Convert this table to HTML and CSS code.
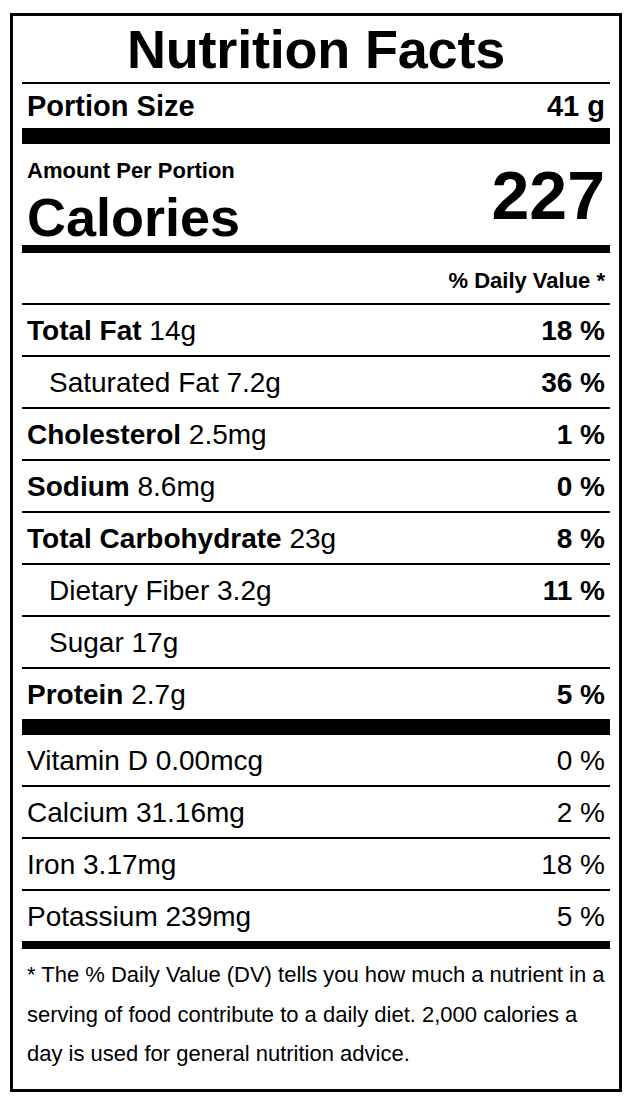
FILE: index.html
```html
<!DOCTYPE html>
<html lang="en">
<head>
<meta charset="utf-8">
<title>Nutrition Facts</title>
<link rel="stylesheet" href="styles.css">
</head>
<body>
<section class="label">
  <h1 class="title">Nutrition Facts</h1>
  <div class="portion">
    <span>Portion Size</span>
    <span>41 g</span>
  </div>
  <div class="calories">
    <div class="cal-left">
      <div class="amount">Amount Per Portion</div>
      <div class="cal-word">Calories</div>
    </div>
    <div class="cal-num">227</div>
  </div>
  <div class="dv-head">% Daily Value *</div>
  <div class="row"><span><b>Total Fat</b> 14g</span><b>18 %</b></div>
  <div class="row sub"><span>Saturated Fat 7.2g</span><b>36 %</b></div>
  <div class="row"><span><b>Cholesterol</b> 2.5mg</span><b>1 %</b></div>
  <div class="row"><span><b>Sodium</b> 8.6mg</span><b>0 %</b></div>
  <div class="row"><span><b>Total Carbohydrate</b> 23g</span><b>8 %</b></div>
  <div class="row sub"><span>Dietary Fiber 3.2g</span><b>11 %</b></div>
  <div class="row sub"><span>Sugar 17g</span></div>
  <div class="row thick"><span><b>Protein</b> 2.7g</span><b>5 %</b></div>
  <div class="row"><span>Vitamin D 0.00mcg</span><span>0 %</span></div>
  <div class="row"><span>Calcium 31.16mg</span><span>2 %</span></div>
  <div class="row"><span>Iron 3.17mg</span><span>18 %</span></div>
  <div class="row medium"><span>Potassium 239mg</span><span>5 %</span></div>
  <p class="note">* The % Daily Value (DV) tells you how much a nutrient in a serving of food contribute to a daily diet. 2,000 calories a day is used for general nutrition advice.</p>
</section>
</body>
</html>
```

FILE: styles.css
```css
html, body {
  margin: 0;
  padding: 0;
  background: #fff;
}

body {
  font-family: "Liberation Sans", Arial, Helvetica, sans-serif;
  color: #000;
  padding: 13px 12px 12px 10px;
}

.label {
  width: 588px;
  border: 3px solid #000;
  padding: 0 9px;
}

.title {
  margin: 0;
  font-size: 54px;
  font-weight: 700;
  line-height: 66px;
  text-align: center;
  border-bottom: 2px solid #000;
  letter-spacing: -0.2px;
}

.portion {
  display: flex;
  justify-content: space-between;
  font-size: 29px;
  font-weight: 700;
  line-height: 44px;
  padding: 0 5px;
  border-bottom: 16px solid #000;
}

.calories {
  display: flex;
  justify-content: space-between;
  align-items: flex-start;
  padding: 0 5px;
  border-bottom: 8px solid #000;
  height: 101px;
}

.cal-left {
  padding-top: 14px;
}

.amount {
  font-size: 22px;
  font-weight: 700;
  line-height: 26px;
  margin-bottom: 5px;
}

.cal-word {
  font-size: 54px;
  font-weight: 700;
  line-height: 56px;
}

.cal-num {
  font-size: 68px;
  font-weight: 700;
  line-height: 68px;
  padding-top: 17px;
}

.dv-head {
  font-size: 22px;
  font-weight: 700;
  line-height: 44px;
  height: 44px;
  padding: 6px 5px 0;
  text-align: right;
  border-bottom: 2px solid #000;
}

.row {
  display: flex;
  justify-content: space-between;
  font-size: 28px;
  line-height: 48px;
  height: 48px;
  padding: 2px 5px 0;
  border-bottom: 2px solid #000;
}

.row.sub {
  padding-left: 27px;
}

.row.thick {
  border-bottom-width: 16px;
}

.row.medium {
  border-bottom-width: 8px;
}

.note {
  margin: 0;
  padding: 6px 5px 15px;
  font-size: 22px;
  line-height: 39.5px;
}
```
